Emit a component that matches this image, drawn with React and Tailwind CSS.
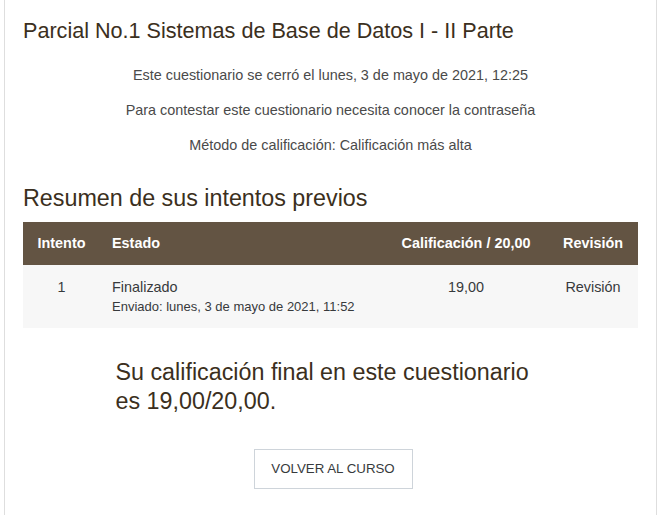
export default function App() {
  return (
    <div className="min-h-[515px] bg-white font-['Liberation_Sans',Arial,sans-serif] text-[#373a3c]">
      <div className="ml-[4px] w-[653px] min-h-[515px] border-x border-[#dedede] px-[18px] pt-[17px]">
        <h2 className="text-[21.6px] leading-[28px] text-[#3b2f20]">
          Parcial No.1 Sistemas de Base de Datos I - II Parte
        </h2>

        <div className="mt-[20px] flex flex-col items-center gap-[15px] text-[14.4px] leading-[20px] text-[#4a4a4a]">
          <p>Este cuestionario se cerró el lunes, 3 de mayo de 2021, 12:25</p>
          <p>Para contestar este cuestionario necesita conocer la contraseña</p>
          <p>Método de calificación: Calificación más alta</p>
        </div>

        <h3 className="mt-[28px] text-[23.3px] leading-[30px] text-[#3b2f20]">
          Resumen de sus intentos previos
        </h3>

        <div className="mt-[9px] w-[615px]">
          <div className="grid h-[43px] grid-cols-[77px_284px_164px_90px] items-center bg-[#635443] text-[14.4px] font-bold text-white">
            <div className="text-center">Intento</div>
            <div className="pl-[12px]">Estado</div>
            <div className="text-center">Calificación / 20,00</div>
            <div className="text-center">Revisión</div>
          </div>
          <div className="grid h-[63px] grid-cols-[77px_284px_164px_90px] items-start bg-[#f7f7f7] pt-[13px] text-[14.4px] text-[#373a3c]">
            <div className="text-center leading-[18px]">1</div>
            <div className="pl-[12px]">
              <div className="leading-[18px]">Finalizado</div>
              <div className="mt-[3px] text-[13px] leading-[16px]">Enviado: lunes, 3 de mayo de 2021, 11:52</div>
            </div>
            <div className="text-center leading-[18px]">19,00</div>
            <div className="text-center leading-[18px]">Revisión</div>
          </div>
        </div>

        <div className="mx-auto mt-[30px] w-[430px] text-[23.3px] leading-[29px] text-[#3b2f20]">
          Su calificación final en este cuestionario es 19,00/20,00.
        </div>

        <div className="mt-[33px] flex justify-center pl-[5px]">
          <button className="h-[40px] w-[159px] border border-[#ced4da] bg-white text-[13.3px] uppercase text-[#373a3c]">
            Volver al curso
          </button>
        </div>
      </div>
    </div>
  );
}
